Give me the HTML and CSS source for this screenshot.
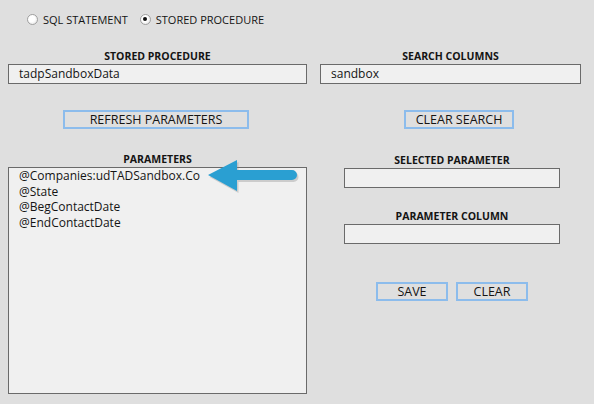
FILE: index.html
```html
<!DOCTYPE html>
<html>
<head>
    <title>Stored Procedure Parameters</title>
    <link rel="stylesheet" href="styles.css">
</head>
<body>
    <div class="source-row">
        <label class="radio"><span class="dot"></span>SQL STATEMENT</label>
        <label class="radio"><span class="dot checked"></span>STORED PROCEDURE</label>
    </div>

    <div class="columns">
        <div class="col-left">
            <div class="caption">STORED PROCEDURE</div>
            <div class="field">tadpSandboxData</div>
            <div class="btn-row btn-row-top">
                <button class="btn btn-refresh">REFRESH PARAMETERS</button>
            </div>
            <div class="caption caption-params">PARAMETERS</div>
            <div class="listbox">
                <div class="item">@Companies:udTADSandbox.Co</div>
                <div class="item">@State</div>
                <div class="item">@BegContactDate</div>
                <div class="item">@EndContactDate</div>
            </div>
            <!-- pointer to the first parameter -->
            <svg class="arrow" width="100" height="40" viewBox="0 0 100 40">
                <path d="M4 17 L33 2 L33 12 L88 12 A5 5 0 0 1 88 22 L33 22 L33 33 Z" fill="#8a8a8a" opacity="0.35" transform="translate(1.5 2)"/>
                <path d="M4 17 L33 2 L33 12 L88 12 A5 5 0 0 1 88 22 L33 22 L33 33 Z" fill="#2a9fd2"/>
            </svg>
        </div>

        <div class="col-right">
            <div class="caption">SEARCH COLUMNS</div>
            <div class="field">sandbox</div>
            <div class="btn-row btn-row-top">
                <button class="btn btn-search">CLEAR SEARCH</button>
            </div>
            <div class="sub">
                <div class="caption">SELECTED PARAMETER</div>
                <div class="field field-small"></div>
                <div class="caption caption-gap">PARAMETER COLUMN</div>
                <div class="field field-small"></div>
                <div class="btn-row btn-row-bottom">
                    <button class="btn btn-small">SAVE</button>
                    <button class="btn btn-small">CLEAR</button>
                </div>
            </div>
        </div>
    </div>
</body>
</html>
```

FILE: styles.css
```css
body {
    background-color: #dfdfdf;
    font-family: "Open Sans", "DejaVu Sans", sans-serif;
    font-size: 11px;
    color: #141414;
    margin: 0;
    padding: 8px;
    height: 388px;
}

.source-row {
    display: flex;
    align-items: center;
    gap: 12px;
    padding-left: 19px;
    height: 22px;
}

.radio {
    display: flex;
    align-items: center;
    gap: 5px;
}

.dot {
    width: 9px;
    height: 9px;
    border: 1px solid #a0a0a0;
    border-radius: 50%;
    background: radial-gradient(circle at 40% 40%, #ffffff 40%, #dcdcdc);
    position: relative;
}

.dot.checked::after {
    content: "";
    position: absolute;
    left: 2.5px;
    top: 2.5px;
    width: 4px;
    height: 4px;
    border-radius: 50%;
    background: #111;
}

.columns {
    display: flex;
    gap: 13px;
    margin-top: 18px;
}

.col-left {
    width: 299px;
    position: relative;
}

.col-right {
    width: 261px;
}

.caption {
    font-weight: bold;
    font-size: 10.5px;
    text-align: center;
    height: 16px;
    line-height: 16px;
}

.field {
    height: 18px;
    line-height: 18px;
    border: 1px solid #6a6a6a;
    background-color: #f0f0f0;
    padding-left: 10px;
    font-size: 12px;
}

.btn-row {
    display: flex;
    justify-content: center;
    gap: 8px;
}

.btn-row-top {
    margin-top: 26px;
}

.btn {
    font-family: "Open Sans", "DejaVu Sans", sans-serif;
    font-size: 12.5px;
    color: #141414;
    background-color: #dfdfdf;
    border: 2px solid #8cbcec;
    height: 19px;
    padding: 0;
    line-height: 15px;
}

.btn-refresh {
    width: 186px;
    margin-left: -3px;
}

.btn-search {
    width: 110px;
    margin-left: 17px;
}

.btn-small {
    width: 72px;
}

.caption-params {
    margin-top: 22px;
}

.listbox {
    height: 225px;
    border: 1px solid #6a6a6a;
    background-color: #f0f0f0;
    padding: 0 0 0 10px;
    font-size: 12px;
}

.item {
    height: 15.5px;
    line-height: 16px;
}

.arrow {
    position: absolute;
    left: 196px;
    top: 110px;
}

.sub {
    width: 216px;
    margin: 23px 0 0 24px;
}

.field-small {
    padding: 0;
}

.caption-gap {
    margin-top: 20px;
}

.btn-row-bottom {
    margin-top: 38px;
}
```
